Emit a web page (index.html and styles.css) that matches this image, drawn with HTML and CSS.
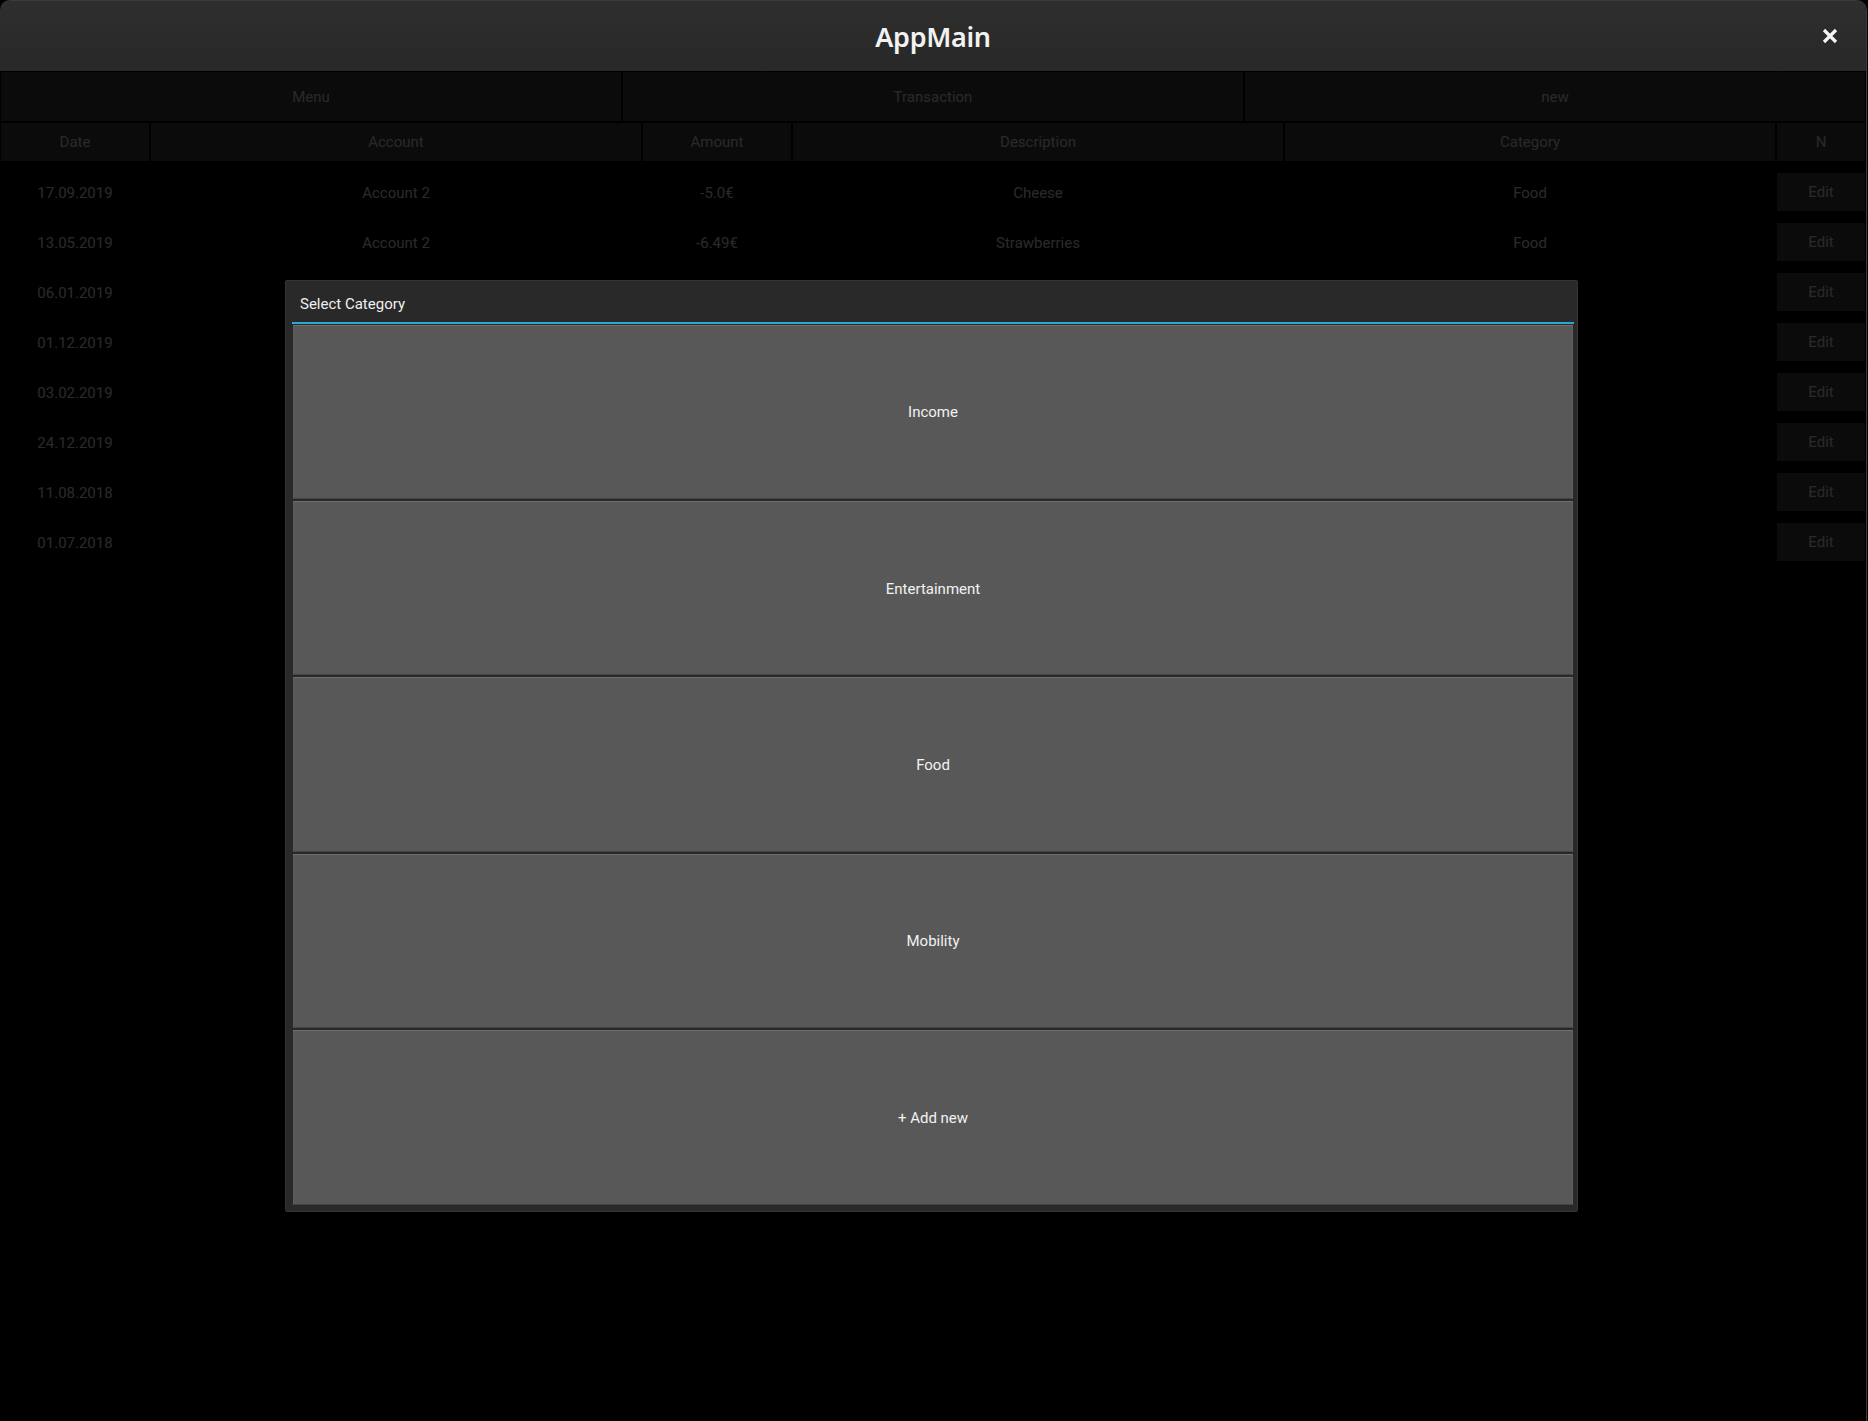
FILE: index.html
```html
<!DOCTYPE html>
<html lang="en">
<head>
  <meta charset="UTF-8">
  <title>AppMain</title>
  <link rel="stylesheet" href="styles.css">
</head>
<body>
  <div class="window">
    <div class="titlebar">
      <span></span>
      <h1 class="title">AppMain</h1>
      <button class="close" aria-label="Close">
        <svg width="16" height="16" viewBox="0 0 16 16">
          <path d="M2 2 L14 14 M14 2 L2 14" stroke="#f4f4f4" stroke-width="3.2" fill="none"/>
        </svg>
      </button>
    </div>

    <div class="content">
      <div class="nav">
        <button class="btn">Menu</button>
        <button class="btn">Transaction</button>
        <button class="btn">new</button>
      </div>

      <div class="cols head">
        <button class="btn">Date</button>
        <button class="btn">Account</button>
        <button class="btn">Amount</button>
        <button class="btn">Description</button>
        <button class="btn">Category</button>
        <button class="btn">N</button>
      </div>

      <div class="rows">
        <div class="cols row">
          <span>17.09.2019</span><span>Account 2</span><span>-5.0€</span><span>Cheese</span><span>Food</span>
          <button class="btn edit">Edit</button>
        </div>
        <div class="cols row">
          <span>13.05.2019</span><span>Account 2</span><span>-6.49€</span><span>Strawberries</span><span>Food</span>
          <button class="btn edit">Edit</button>
        </div>
        <!-- the popup covers the middle columns of these rows -->
        <div class="cols row">
          <span>06.01.2019</span><span></span><span></span><span></span><span></span>
          <button class="btn edit">Edit</button>
        </div>
        <div class="cols row">
          <span>01.12.2019</span><span></span><span></span><span></span><span></span>
          <button class="btn edit">Edit</button>
        </div>
        <div class="cols row">
          <span>03.02.2019</span><span></span><span></span><span></span><span></span>
          <button class="btn edit">Edit</button>
        </div>
        <div class="cols row">
          <span>24.12.2019</span><span></span><span></span><span></span><span></span>
          <button class="btn edit">Edit</button>
        </div>
        <div class="cols row">
          <span>11.08.2018</span><span></span><span></span><span></span><span></span>
          <button class="btn edit">Edit</button>
        </div>
        <div class="cols row">
          <span>01.07.2018</span><span></span><span></span><span></span><span></span>
          <button class="btn edit">Edit</button>
        </div>
      </div>

      <!-- category popup -->
      <div class="overlay">
        <div class="dialog">
          <div class="dialog-title">Select Category</div>
          <div class="separator"></div>
          <div class="choices">
            <button class="choice">Income</button>
            <button class="choice">Entertainment</button>
            <button class="choice">Food</button>
            <button class="choice">Mobility</button>
            <button class="choice">+ Add new</button>
          </div>
        </div>
      </div>
    </div>
  </div>
</body>
</html>
```

FILE: styles.css
```css
* {
  box-sizing: border-box;
}

body {
  margin: 0;
  background-color: #000;
  font-family: Roboto, "Liberation Sans", sans-serif;
  font-size: 15px;
  overflow: hidden;
}

.window {
  width: 1867px;
  height: 1421px;
  display: flex;
  flex-direction: column;
  border-right: 1px solid #3a3a3a;
  border-radius: 10px 10px 0 0;
  background-color: #000;
}

.titlebar {
  height: 71px;
  display: grid;
  grid-template-columns: 1fr auto 1fr;
  align-items: center;
  padding: 0 28px;
  background: linear-gradient(#2e2e2e, #282828);
  border-top: 1px solid #3b3b3b;
  border-radius: 10px 10px 0 0;
}

.title {
  margin: 0;
  font-family: "Noto Sans", "Open Sans", sans-serif;
  font-size: 27px;
  font-weight: 600;
  color: #f2f2f2;
  letter-spacing: -0.3px;
}

.close {
  justify-self: end;
  width: 16px;
  height: 16px;
  padding: 0;
  border: none;
  background: none;
  display: flex;
}

.content {
  flex: 1;
  position: relative;
  color: #fff;
}

.btn {
  margin: 1px;
  border: none;
  padding: 0;
  background-color: #444;
  color: #fff;
  font-family: inherit;
  font-size: 15px;
}

.nav {
  display: grid;
  grid-template-columns: repeat(3, 1fr);
}

.nav .btn {
  height: 49px;
}

.cols {
  display: grid;
  grid-template-columns: 150px 492px 150px 492px 492px 90px;
}

.head .btn {
  height: 38px;
}

.rows {
  padding-top: 5px;
}

.row {
  height: 50px;
  align-items: center;
  text-align: center;
}

.row span {
  padding-top: 1px;
}

.row .edit {
  height: 38px;
  margin: 6px 1px;
}

.overlay {
  position: absolute;
  inset: 0;
  display: flex;
  align-items: center;
  justify-content: center;
  padding: 0 3px 1px 0;
  background-color: rgba(0, 0, 0, 0.84);
}

.dialog {
  width: 1293px;
  height: 932px;
  display: flex;
  flex-direction: column;
  padding: 0 3px 6px 6px;
  background-color: #292929;
  border: 1px solid #343434;
  border-radius: 2px;
}

.dialog-title {
  height: 41px;
  padding: 14px 0 0 8px;
  line-height: 18px;
  color: #f0f0f0;
}

.separator {
  height: 2px;
  background-color: #2fa7d4;
}

.choices {
  flex: 1;
  display: flex;
  flex-direction: column;
  gap: 2px;
  padding: 1px 1px 0 1px;
}

.choice {
  flex: 1;
  padding-top: 2px;
  border: 1px solid #5e5e5e;
  border-top-color: #6e6e6e;
  border-bottom-color: #434343;
  background-color: #585858;
  color: #f2f2f2;
  font-family: inherit;
  font-size: 15px;
}
```
